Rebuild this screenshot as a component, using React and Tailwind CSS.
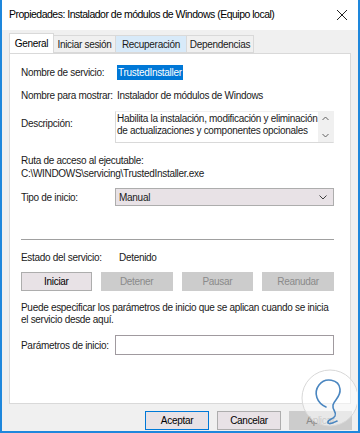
import React from 'react';

const font = { fontFamily: '"Liberation Sans", Arial, sans-serif' };

function Tab({ label, active, hover, w }) {
  if (active) {
    return (
      <div className={`relative z-10 -mb-px flex h-[20px] items-center justify-center border border-b-0 border-[#d9d9d9] bg-white text-black ${w}`}>
        {label}
      </div>
    );
  }
  return (
    <div
      className={`mt-[2px] -ml-px flex h-[18px] items-center justify-center border border-[#d9d9d9] ${w} ${
        hover ? 'bg-[#d8eaf9]' : 'bg-[#f0f0f0]'
      }`}
    >
      {label}
    </div>
  );
}

function Btn({ children, disabled, primary, className = '' }) {
  return (
    <div
      className={`flex h-[19px] items-center justify-center border ${
        disabled
          ? 'border-[#cccccc] bg-[#cccccc] text-[#8a8a8a]'
          : primary
          ? 'border-[#0078d7] bg-[#e8e2e6] text-black'
          : 'border-[#adadad] bg-[#e8e2e6] text-black'
      } ${className}`}
    >
      {children}
    </div>
  );
}

export default function App() {
  return (
    <div
      className="relative flex h-[433px] w-[360px] flex-col overflow-hidden whitespace-nowrap border-x-2 border-b-2 border-[#1e87dc] bg-[#f0f0f0] text-[10px] tracking-[-0.3px] text-[#1a1a1a]"
      style={font}
    >
      {/* title bar */}
      <div className="flex h-[30px] shrink-0 items-center justify-between bg-white pl-[7px] pr-[8px] text-[10.5px] tracking-[-0.5px] text-black">
        <span>Propiedades: Instalador de módulos de Windows (Equipo local)</span>
        <svg width="12" height="12" viewBox="0 0 12 12" className="mr-[2px]">
          <path d="M1 1 L11 11 M11 1 L1 11" stroke="#222" strokeWidth="1" />
        </svg>
      </div>

      {/* tabs */}
      <div className="mt-[3px] flex px-[7px]">
        <Tab label="General" active w="w-[45px]" />
        <Tab label="Iniciar sesión" w="w-[63px]" />
        <Tab label="Recuperación" hover w="w-[72px]" />
        <Tab label="Dependencias" w="w-[68px]" />
      </div>

      {/* panel */}
      <div className="mx-[7px] flex h-[351px] flex-col border border-[#d9d9d9] bg-white pl-[11px] pr-[16px]">
        <div className="mt-[11px] flex h-[14px] items-center">
          <span className="w-[96px]">Nombre de servicio:</span>
          <span className="bg-[#0078d7] px-px text-white">TrustedInstaller</span>
        </div>
        <div className="mt-[9px] flex h-[14px] items-center">
          <span className="w-[96px]">Nombre para mostrar:</span>
          <span>Instalador de módulos de Windows</span>
        </div>
        <div className="mt-[9px] flex">
          <span className="w-[95px] pt-[5px]">Descripción:</span>
          <div className="flex h-[32px] w-[221px] border border-[#d9d9d9] border-t-[#f0f0f0] border-r-[#f0f0f0]">
            <div className="flex-1 whitespace-normal pl-[1px] pt-[1px] leading-[12px]">
              Habilita la instalación, modificación y eliminación de actualizaciones y componentes opcionales
            </div>
            <div className="flex w-[15px] flex-col items-center justify-between bg-[#f0f0f0] py-[4px]">
              <svg width="7" height="5" viewBox="0 0 7 5"><path d="M0.5 4 L3.5 1 L6.5 4" stroke="#606060" fill="none" /></svg>
              <svg width="7" height="5" viewBox="0 0 7 5"><path d="M0.5 1 L3.5 4 L6.5 1" stroke="#606060" fill="none" /></svg>
            </div>
          </div>
        </div>
        <div className="mt-[11px] leading-[13px]">
          <div>Ruta de acceso al ejecutable:</div>
          <div>C:\WINDOWS\servicing\TrustedInstaller.exe</div>
        </div>
        <div className="mt-[8px] flex items-center">
          <span className="w-[95px]">Tipo de inicio:</span>
          <div className="flex h-[18px] w-[221px] items-center justify-between border border-[#adadad] bg-[#e8e2e6] pl-[3px] pr-[6px]">
            <span>Manual</span>
            <svg width="8" height="5" viewBox="0 0 8 5"><path d="M0.5 0.5 L4 4 L7.5 0.5" stroke="#404040" fill="none" /></svg>
          </div>
        </div>
        <div className="mt-[33px] h-px w-[313px] bg-[#a0a0a0]" />
        <div className="mt-[10px] flex h-[14px] items-center">
          <span className="w-[98px]">Estado del servicio:</span>
          <span>Detenido</span>
        </div>
        <div className="mt-[8px] flex gap-[9px]">
          <Btn className="w-[71px]">Iniciar</Btn>
          <Btn disabled className="w-[72px]">Detener</Btn>
          <Btn disabled className="w-[72px]">Pausar</Btn>
          <Btn disabled className="w-[72px]">Reanudar</Btn>
        </div>
        <div className="mt-[11px] leading-[12px]">
          <div>Puede especificar los parámetros de inicio que se aplican cuando se inicia</div>
          <div>el servicio desde aquí.</div>
        </div>
        <div className="mt-[9px] flex items-center">
          <span className="w-[95px]">Parámetros de inicio:</span>
          <div className="h-[20px] w-[221px] border border-[#a09a9f] bg-white" />
        </div>
      </div>

      {/* bottom buttons */}
      <div className="mt-[7px] flex justify-end gap-[8px] pr-[6px]">
        <Btn primary className="w-[64px]">Aceptar</Btn>
        <Btn className="w-[64px]">Cancelar</Btn>
        <Btn disabled className="w-[63px]">Aplicar</Btn>
      </div>

      {/* watermark */}
      <svg
        className="pointer-events-none absolute bottom-[2px] right-[1px]"
        width="58"
        height="62"
        viewBox="0 0 58 62"
      >
        <circle cx="31" cy="31" r="28" fill="white" fillOpacity="0.55" stroke="#d8d8d8" strokeWidth="1" />
        <path
          d="M27 40 C18 36 14 26 20 18 C26 10 40 12 41 22 C42 30 35 33 34 38 C33 44 38 44 36 49 C34 53 28 52 29 56 C31 58 36 55 38 54"
          fill="none"
          stroke="#4a86c0"
          strokeWidth="1.6"
          strokeLinecap="round"
        />
      </svg>
    </div>
  );
}
